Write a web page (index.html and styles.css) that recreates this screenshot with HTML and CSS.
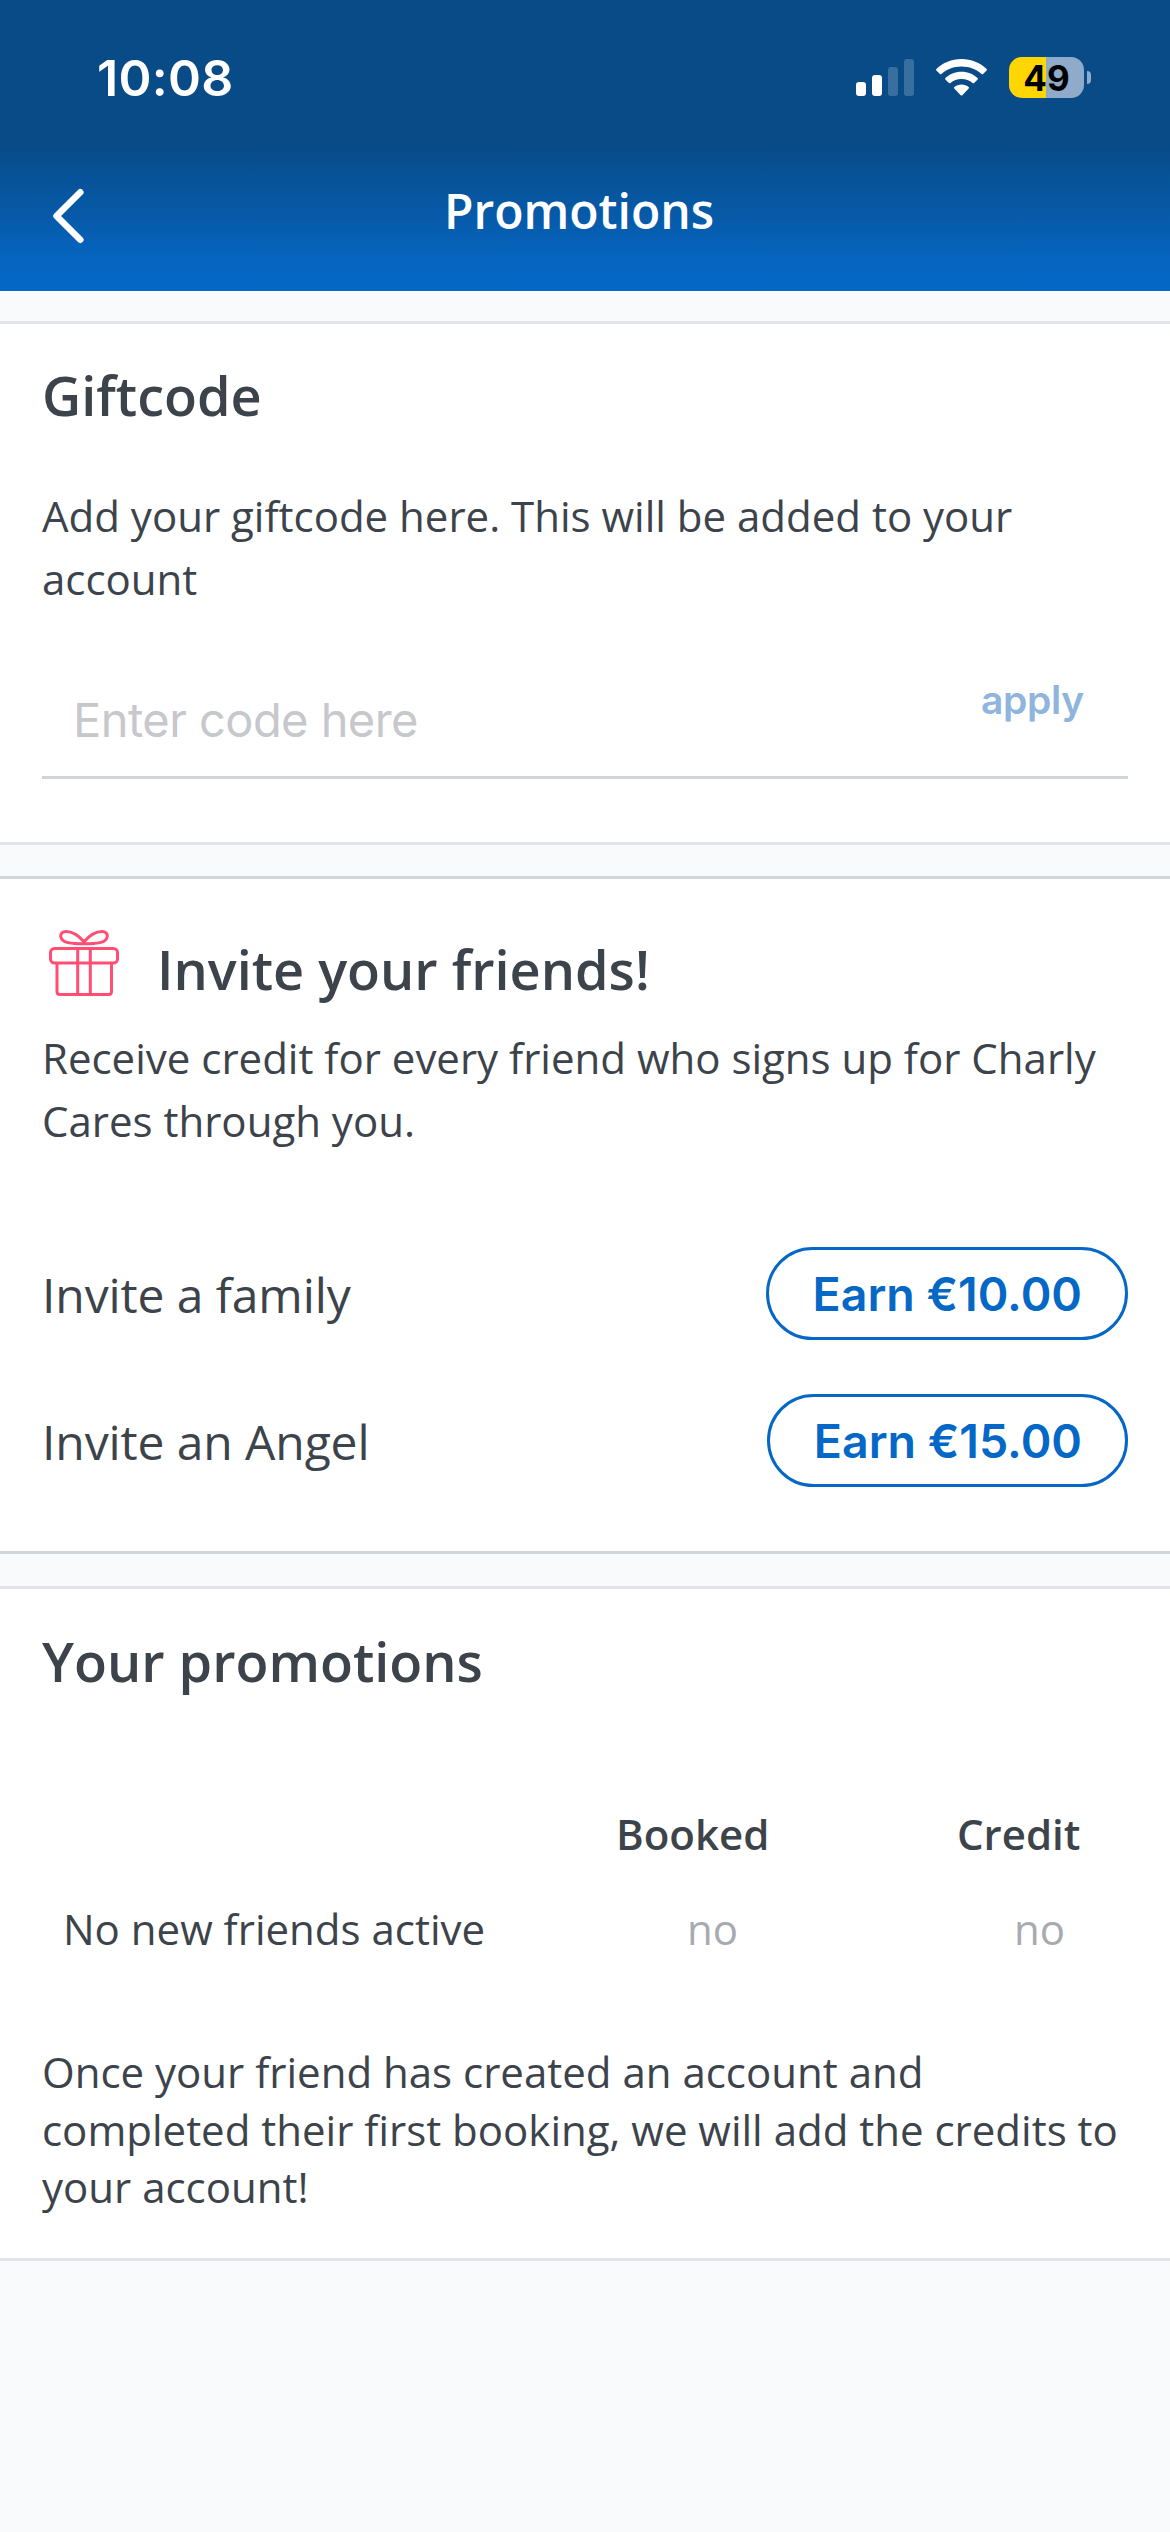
FILE: index.html
```html
<!DOCTYPE html>
<html lang="en">
<head>
<meta charset="utf-8">
<title>Promotions</title>
<link rel="stylesheet" href="styles.css">
</head>
<body>
<header class="header">
  <div class="status">
    <span class="time">10:08</span>
    <div class="indicators">
      <svg class="signal" width="58" height="37" viewBox="0 0 58 37" fill="#fff">
        <rect x="0" y="23" width="10" height="14" rx="3"/>
        <rect x="16" y="16" width="10" height="21" rx="3"/>
        <rect x="32" y="8" width="10" height="29" rx="3" opacity=".2"/>
        <rect x="48" y="0" width="10" height="37" rx="3" opacity=".2"/>
      </svg>
      <svg class="wifi" width="51" height="37" viewBox="0 0 51 37" fill="#fff">
        <path d="M25.500 0C35.300 0 44.200 3.800 50.600 10Q51.300 10.800 50.600 11.500L47.100 15Q46.300 15.700 45.500 15C40.300 10.100 33.300 7.400 25.500 7.400S10.700 10.100 5.500 15Q4.700 15.700 3.900 15L.4 11.500Q-.3 10.800 .4 10C6.800 3.800 15.700 0 25.500 0Z"/>
        <path d="M25.500 12.700C32 12.700 37.500 15.100 41.600 19Q42.300 19.800 41.600 20.500L38.100 24Q37.300 24.700 36.500 24C33.600 21.400 29.800 20 25.500 20S17.400 21.400 14.500 24Q13.700 24.700 12.900 24L9.400 20.500Q8.700 19.800 9.400 19C13.500 15.100 19 12.700 25.500 12.700Z"/>
        <path d="M25.500 25.400C28.300 25.400 30.800 26.300 32.700 27.900Q33.400 28.700 32.700 29.400L26.300 36.200Q25.500 37 24.700 36.200L18.300 29.400Q17.600 28.700 18.300 27.900C20.200 26.300 22.700 25.400 25.500 25.400Z"/>
      </svg>
      <div class="battery"><b class="level">49</b><i class="nub"></i></div>
    </div>
  </div>
  <nav class="nav">
    <svg class="back" width="32" height="56" viewBox="0 0 32 56" fill="none" stroke="#fff" stroke-width="6.500" stroke-linecap="round" stroke-linejoin="round"><path d="M28.300 4.300 4.500 28 28.300 51.700"/></svg>
    <h1 class="title">Promotions</h1>
  </nav>
</header>
<main>
  <section class="card gift">
    <h2>Giftcode</h2>
    <p class="copy">Add your giftcode here. This will be added to your account</p>
    <div class="field">
      <span class="placeholder">Enter code here</span>
      <button class="apply">apply</button>
    </div>
  </section>
  <section class="card invite">
    <div class="heading">
      <svg width="80" height="74" viewBox="0 0 80 74" fill="none" stroke="#ff4f73" stroke-width="3" stroke-linejoin="round">
        <rect x="8.500" y="22.500" width="67" height="14.500" rx="4"/>
        <path d="M15 37V65.500Q15 68.500 18 68.500H66.500Q69.500 68.500 69.500 65.500V37M35.700 22.500V68.500M48.300 22.500V68.500"/>
        <path d="M42 15.800C37 10 30 5.500 24 5.500C16.800 5.500 16.500 14.500 26 16.600C31 17.700 37 17.800 42 17.800C47 17.800 53 17.700 58 16.600C67.500 14.500 67.200 5.500 60 5.500C54 5.500 47 10 42 15.800Z"/>
      </svg>
      <h2>Invite your friends!</h2>
    </div>
    <p class="copy">Receive credit for every friend who signs up for Charly Cares through you.</p>
    <div class="offer"><span class="label">Invite a family</span><button class="earn">Earn €10.00</button></div>
    <div class="offer"><span class="label">Invite an Angel</span><button class="earn">Earn €15.00</button></div>
  </section>
  <section class="card promos">
    <h2>Your promotions</h2>
    <div class="table">
      <span></span><strong>Booked</strong><strong>Credit</strong>
      <span>No new friends active</span><span class="none">no</span><span class="none last">no</span>
    </div>
    <p class="note">Once your friend has created an account and<br>completed their first booking, we will add the credits to<br>your account!</p>
  </section>
</main>
</body>
</html>
```
FILE: styles.css
```css
* { box-sizing: border-box; margin: 0; padding: 0; }

body {
  width: 1170px;
  min-height: 2532px;
  background: #f9fafc;
  color: #3c434b;
  font-family: "Open Sans", sans-serif;
  font-size: 42px;
}

svg { display: block; flex: none; }
button { border: 0; background: none; font-family: Inter, sans-serif; font-weight: 600; }

.header {
  height: 291px;
  color: #fff;
  background: linear-gradient(#084b87 0, #084b87 144px, #07539a 182px, #075baa 220px, #0566c2 264px, #0568c6 291px);
}

.status {
  display: flex;
  justify-content: space-between;
  height: 145px;
  padding: 0 79px 0 97px;
  font-family: Inter, sans-serif;
}
.time { padding-top: 47px; font-size: 50px; line-height: 62px; font-weight: 600; letter-spacing: .3px; }
.indicators { display: flex; align-items: flex-start; padding-top: 57px; }
.signal { margin: 2px 22px 0 0; }
.wifi { margin: 2px 22px 0 0; }
.battery { display: flex; align-items: center; gap: 3px; }
.level {
  width: 75px;
  height: 41px;
  border-radius: 13px;
  background: linear-gradient(90deg, #ffd502 37px, #8fabc9 37px);
  color: #000;
  font-size: 35px;
  line-height: 42px;
  text-align: center;
}
.nub { width: 4px; height: 13px; border-radius: 0 4px 4px 0; background: #8fabc9; }

.nav {
  display: grid;
  grid-template-columns: 32px 1fr 32px;
  height: 146px;
  padding: 33px 64px 0 52px;
}
.back { margin-top: 10px; }
.title { font-size: 48px; line-height: 65px; font-weight: 600; text-align: center; }

main { display: flex; flex-direction: column; padding-top: 30px; }

.card {
  padding: 0 42px;
  border: solid #e2e4ea;
  border-width: 3px 0;
  background: #fff;
}
h2 { font-size: 54px; line-height: 74px; font-weight: 600; }
.copy { line-height: 63px; }

.gift { padding-top: 34px; padding-bottom: 63px; }
.gift .copy { margin: 52px 0 54px; }
.field {
  display: flex;
  justify-content: space-between;
  height: 115px;
  padding: 0 44px 0 31px;
  border-bottom: 3px solid #d0d5da;
}
.placeholder {
  color: #c7c8cc;
  font-family: Inter, sans-serif;
  font-size: 47px;
  line-height: 112px;
  letter-spacing: -.55px;
}
.apply { height: 71px; color: #8fb5dd; font-size: 39px; line-height: 71px; letter-spacing: -.3px; }

.invite { margin-top: 31px; padding-top: 47px; padding-bottom: 64px; border-color: #d0d5da; }
.heading { display: flex; gap: 35px; margin-bottom: 20px; }
.heading h2 { padding-top: 6px; }
.invite .copy { margin-bottom: 95px; }
.offer { display: flex; justify-content: space-between; }
.offer + .offer { margin-top: 54px; }
.label { padding-top: 15px; font-size: 48px; line-height: 65px; letter-spacing: -.1px; }
.earn {
  height: 93px;
  padding: 0 43px 0 44px;
  border: 3px solid #0568c6;
  border-radius: 47px;
  color: #0568c6;
  font-size: 46.500px;
}

.promos { margin-top: 32px; padding-top: 35px; padding-bottom: 42px; }
.table {
  display: grid;
  grid-template-columns: 553px 341px 1fr;
  row-gap: 38px;
  margin: 107px 0 86px;
  padding-left: 21px;
  line-height: 57px;
}
.table strong { font-weight: 600; }
.none { padding-left: 71px; color: #a7abb0; }
.last { padding-left: 57px; }
.note { line-height: 57.500px; }
```
